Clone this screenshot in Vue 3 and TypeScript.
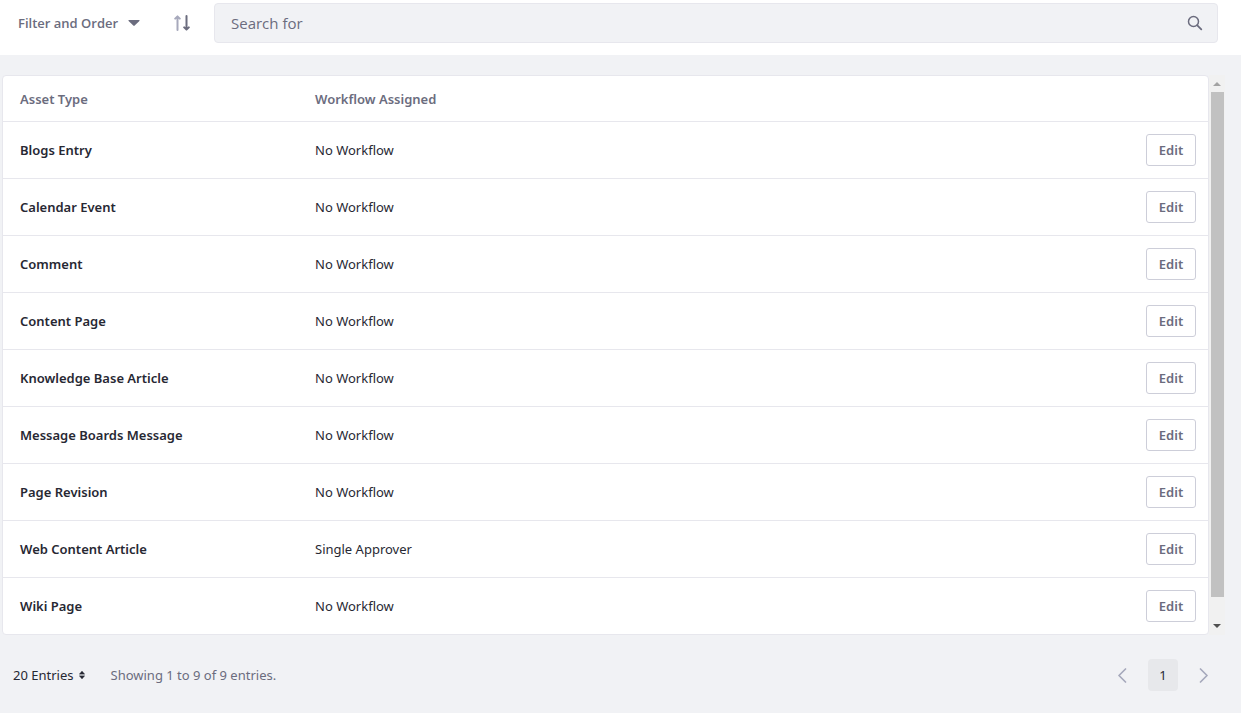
<script setup lang="ts">
import { ref } from 'vue'

interface Assignment {
  asset: string
  workflow: string
}

const rows: Assignment[] = [
  { asset: 'Blogs Entry', workflow: 'No Workflow' },
  { asset: 'Calendar Event', workflow: 'No Workflow' },
  { asset: 'Comment', workflow: 'No Workflow' },
  { asset: 'Content Page', workflow: 'No Workflow' },
  { asset: 'Knowledge Base Article', workflow: 'No Workflow' },
  { asset: 'Message Boards Message', workflow: 'No Workflow' },
  { asset: 'Page Revision', workflow: 'No Workflow' },
  { asset: 'Web Content Article', workflow: 'Single Approver' },
  { asset: 'Wiki Page', workflow: 'No Workflow' },
]

const query = ref('')
const pageSize = ref('20')
</script>

<template>
  <div class="page">
    <header class="toolbar">
      <button type="button" class="plain filter">
        Filter and Order
        <svg width="12" height="6" viewBox="0 0 12 6" aria-hidden="true">
          <path d="M1 0h10q1 .2.4 1L6.7 5.6q-.7.6-1.4 0L.6 1Q0 .2 1 0z" fill="#6b6c7e" />
        </svg>
      </button>
      <button type="button" class="plain sort" aria-label="Reverse sort direction">
        <svg width="16" height="16" viewBox="0 0 16 16" fill="none" stroke-width="2" stroke-linecap="round" stroke-linejoin="round" aria-hidden="true">
          <path d="M3.5 15V1.6M1.2 3.6 3.5 1.4l2.3 2.2" stroke="#a7a9bc" />
          <path d="M12.5 1v13.4M10.2 12.4l2.3 2.2 2.3-2.2" stroke="#6b6c7e" />
        </svg>
      </button>
      <form class="search" role="search" @submit.prevent>
        <input v-model="query" type="text" placeholder="Search for" aria-label="Search for" />
        <button type="submit" class="plain" aria-label="Search">
          <svg width="16" height="16" viewBox="0 0 16 16" fill="none" stroke="#6b6c7e" stroke-linecap="round" aria-hidden="true">
            <circle cx="6.5" cy="6.5" r="5" stroke-width="1.5" />
            <path d="m10.3 10.3 4 4" stroke-width="1.8" />
          </svg>
        </button>
      </form>
    </header>

    <main class="content">
      <div class="scroller">
        <div class="card">
          <table>
            <thead>
              <tr>
                <th class="asset" scope="col">Asset Type</th>
                <th scope="col">Workflow Assigned</th>
                <td class="action"></td>
              </tr>
            </thead>
            <tbody>
              <tr v-for="row in rows" :key="row.asset">
                <th class="asset" scope="row">{{ row.asset }}</th>
                <td>{{ row.workflow }}</td>
                <td class="action">
                  <button type="button" class="edit">Edit</button>
                </td>
              </tr>
            </tbody>
          </table>
        </div>
        <div class="scrollbar" aria-hidden="true">
          <svg width="8" height="4" viewBox="0 0 8 4"><path d="M0 4 4 0l4 4z" fill="#a3a3a3" /></svg>
          <div class="track"><div class="thumb"></div></div>
          <svg width="8" height="4" viewBox="0 0 8 4"><path d="M0 0l4 4 4-4z" fill="#505050" /></svg>
        </div>
      </div>

      <footer class="pagination">
        <label class="entries">
          <select v-model="pageSize" aria-label="Entries per page">
            <option value="20">20 Entries</option>
            <option value="40">40 Entries</option>
            <option value="60">60 Entries</option>
          </select>
          <svg width="6" height="8" viewBox="0 0 6 8" aria-hidden="true">
            <path d="M.2 3.2 3 0l2.8 3.2zM.2 4.8 3 8l2.8-3.2z" fill="#272833" stroke="#272833" stroke-width=".3" />
          </svg>
        </label>
        <p>Showing 1 to 9 of 9 entries.</p>
        <nav aria-label="Pages">
          <button type="button" class="plain" aria-label="Previous page">
            <svg width="10" height="16" viewBox="0 0 10 16" aria-hidden="true">
              <path d="M8.5 2 2 8.5 8.5 15" fill="none" stroke="#a7a9bc" stroke-width="1.7" stroke-linecap="round" stroke-linejoin="round" />
            </svg>
          </button>
          <a href="#" class="current" aria-current="page">1</a>
          <button type="button" class="plain" aria-label="Next page">
            <svg width="10" height="16" viewBox="0 0 10 16" aria-hidden="true">
              <path d="M1.5 2 8 8.5 1.5 15" fill="none" stroke="#a7a9bc" stroke-width="1.7" stroke-linecap="round" stroke-linejoin="round" />
            </svg>
          </button>
        </nav>
      </footer>
    </main>
  </div>
</template>

<style>
body {
  margin: 0;
  background: #f1f2f5;
}
</style>

<style scoped>
.page,
.page button,
.page input,
.page select {
  font-family: 'Segoe UI', 'Noto Sans', 'Open Sans', sans-serif;
  font-size: 13px;
  line-height: 20px;
}

.page {
  color: #272833;
}

.page * {
  box-sizing: border-box;
}

svg {
  display: block;
  flex: none;
}

.plain {
  display: flex;
  align-items: center;
  justify-content: center;
  padding: 0;
  border: 0;
  background: none;
  color: #6b6c7e;
  cursor: pointer;
}

.toolbar {
  display: flex;
  align-items: center;
  height: 55px;
  padding: 0 23px 9px 18px;
  background: #fff;
}

.toolbar .filter {
  flex: none;
  gap: 10px;
  font-family: 'Segoe UI', 'Open Sans', 'Noto Sans', sans-serif;
  font-weight: 600;
  white-space: nowrap;
}

.sort {
  width: 32px;
  height: 32px;
  margin: 0 16px 0 auto;
}

.search {
  display: flex;
  align-items: center;
  width: calc(100% - 196px);
  height: 40px;
  padding: 0 14px 0 16px;
  border: 1px solid #e7e7ed;
  border-radius: 4px;
  background: #f1f2f5;
}

.search input {
  flex: 1;
  min-width: 0;
  padding: 0;
  border: 0;
  outline: 0;
  background: none;
  color: #272833;
  font-family: 'Segoe UI', 'Open Sans', 'Noto Sans', sans-serif;
  font-size: 15px;
}

.search input::placeholder {
  color: #6b6c7e;
  opacity: 1;
}

.content {
  padding: 20px 16px 20px 2px;
}

.scroller {
  display: flex;
}

.card {
  flex: 1;
  border: 1px solid #e7e7ed;
  border-radius: 4px;
  background: #fff;
}

table {
  width: 100%;
  border-collapse: separate;
  border-spacing: 0;
}

th,
td {
  height: 57px;
  padding: 0 17px 0 0;
  border-top: 1px solid #e7e7ed;
  text-align: left;
  vertical-align: middle;
}

thead th,
thead td {
  height: 45px;
  border-top: 0;
  color: #6b6c7e;
}

th {
  font-weight: 600;
}

.asset {
  width: 312px;
  padding-left: 17px;
}

.action {
  width: 80px;
  padding-right: 12px;
  text-align: right;
}

.edit {
  height: 32px;
  width: 50px;
  padding: 0;
  border: 1px solid #cdced9;
  border-radius: 3px;
  background: #fff;
  color: #6b6c7e;
  font-weight: 600;
  vertical-align: middle;
  cursor: pointer;
}

.scrollbar {
  display: flex;
  flex-direction: column;
  align-items: center;
  gap: 6px;
  width: 16px;
  padding: 7px 0;
  background: #f1f1f1;
}

.track {
  flex: 1;
}

.thumb {
  width: 13px;
  height: 96%;
  background: #c1c1c1;
}

.pagination {
  display: flex;
  align-items: center;
  padding: 24px 10px 0 11px;
}

.entries {
  display: flex;
  align-items: center;
  gap: 5px;
}

.entries select {
  appearance: none;
  padding: 0;
  border: 0;
  background: none;
  color: #272833;
  field-sizing: content;
}

.pagination p {
  margin: 0 auto 0 26px;
  color: #6b6c7e;
}

.pagination nav {
  display: flex;
  gap: 15px;
}

.pagination nav .plain {
  width: 22px;
}

.current {
  display: flex;
  align-items: center;
  justify-content: center;
  width: 30px;
  height: 32px;
  border-radius: 4px;
  background: #e7e8eb;
  color: #272833;
  text-decoration: none;
}
</style>
